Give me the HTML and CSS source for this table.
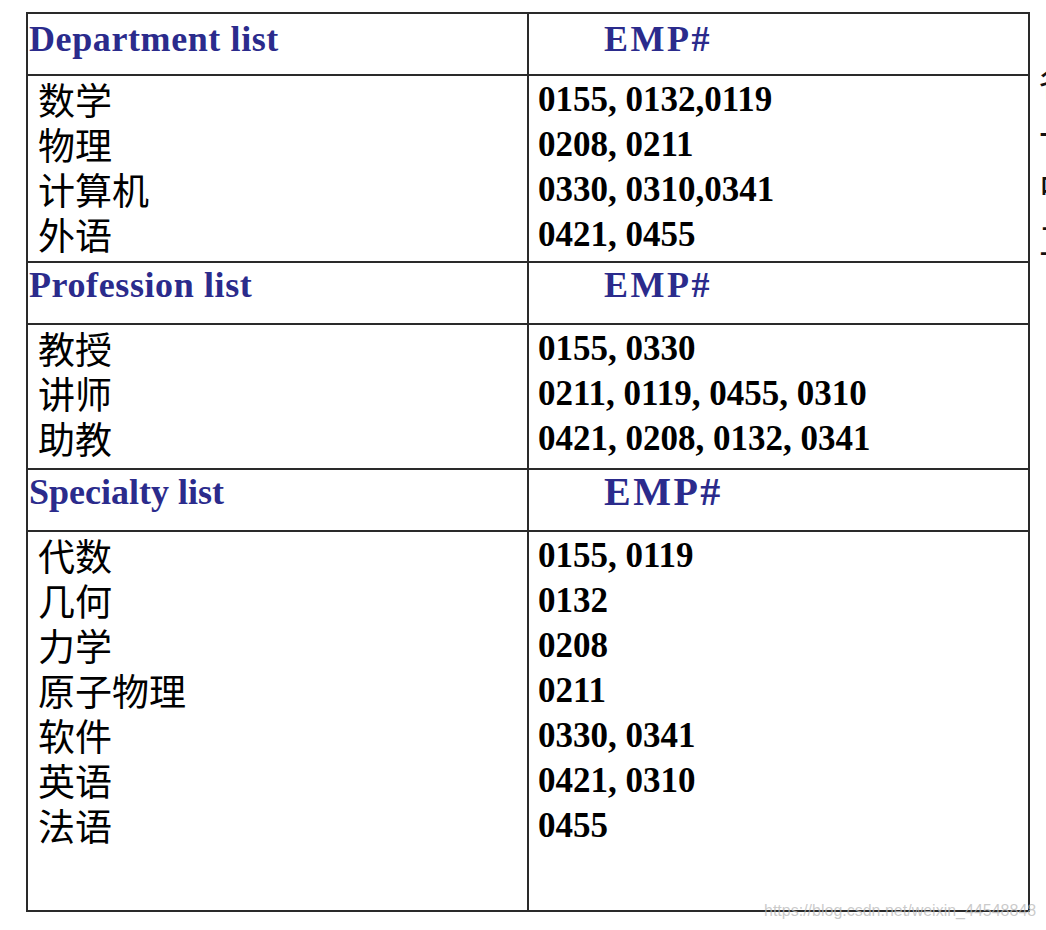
FILE: index.html
```html
<!DOCTYPE html>
<html lang="zh-CN">
<head>
<meta charset="utf-8">
<title>Index lists</title>
<link rel="stylesheet" href="styles.css">
</head>
<body>
<div class="page">
  <div class="sheet">
    <div class="cell head"><span class="title">Department list</span></div>
    <div class="cell head head-right"><span class="emp">EMP#</span></div>
    <div class="cell body-left">
      <div class="line">数学</div>
      <div class="line">物理</div>
      <div class="line">计算机</div>
      <div class="line">外语</div>
    </div>
    <div class="cell body-right">
      <div class="line">0155, 0132,0119</div>
      <div class="line">0208, 0211</div>
      <div class="line">0330, 0310,0341</div>
      <div class="line">0421, 0455</div>
    </div>

    <div class="cell head head-tight"><span class="title">Profession list</span></div>
    <div class="cell head head-right head-tight"><span class="emp">EMP#</span></div>
    <div class="cell body-left">
      <div class="line">教授</div>
      <div class="line">讲师</div>
      <div class="line">助教</div>
    </div>
    <div class="cell body-right">
      <div class="line">0155, 0330</div>
      <div class="line">0211, 0119, 0455, 0310</div>
      <div class="line">0421, 0208, 0132, 0341</div>
    </div>

    <div class="cell head head-tight"><span class="title title-narrow">Specialty list</span></div>
    <div class="cell head head-right head-tight"><span class="emp emp-large">EMP#</span></div>
    <div class="cell body-left">
      <div class="line">代数</div>
      <div class="line">几何</div>
      <div class="line">力学</div>
      <div class="line">原子物理</div>
      <div class="line">软件</div>
      <div class="line">英语</div>
      <div class="line">法语</div>
    </div>
    <div class="cell body-right">
      <div class="line">0155, 0119</div>
      <div class="line">0132</div>
      <div class="line">0208</div>
      <div class="line">0211</div>
      <div class="line">0330, 0341</div>
      <div class="line">0421, 0310</div>
      <div class="line">0455</div>
    </div>
  </div>
  <div class="side">
    <div class="side-line">各</div>
    <div class="side-line">一</div>
    <div class="side-line">中</div>
    <div class="side-line">工</div>
  </div>
</div>
<div class="watermark">https://blog.csdn.net/weixin_44548848</div>
</body>
</html>
```

FILE: styles.css
```css
html, body {
  margin: 0;
  padding: 0;
  background: #ffffff;
  overflow: hidden;
}

body {
  width: 1046px;
  height: 930px;
  position: relative;
  font-family: "Liberation Serif", "Noto Sans CJK SC", serif;
  color: #000;
}

.page {
  display: flex;
  align-items: flex-start;
  padding: 12px 0 0 26px;
}

.sheet {
  flex: none;
  display: grid;
  grid-template-columns: 499px 499px;
  grid-template-rows: 60px 185px 60px 143px 60px 378px;
  gap: 2px;
  padding: 2px;
  background: #2a2a2a;
}

.cell {
  background: #fff;
}

.head {
  padding: 5px 0 0 1px;
  line-height: 40px;
  color: #2b2b8c;
  font-weight: bold;
}

.head-tight {
  padding-top: 2px;
}

.head-right {
  padding-left: 75px;
}

.title {
  font-size: 36px;
  letter-spacing: 0.6px;
}

.title-narrow {
  letter-spacing: 0;
}

.emp {
  font-size: 36px;
  letter-spacing: 2.5px;
}

.emp-large {
  font-size: 40px;
  letter-spacing: 2.5px;
}

.body-left {
  padding: 1px 0 0 10px;
  font-family: "Noto Sans CJK SC", sans-serif;
  font-size: 37px;
}

.body-right {
  padding: 1px 0 0 9px;
  font-family: "Liberation Serif", serif;
  font-weight: bold;
  font-size: 35px;
}

.line {
  height: 45px;
  line-height: 45px;
  white-space: nowrap;
}

.side {
  flex: none;
  margin: 42px 0 0 9px;
  font-family: "Noto Sans CJK SC", sans-serif;
  font-size: 37px;
  color: #111;
}

.side-line {
  height: 53px;
  line-height: 53px;
}

.watermark {
  position: absolute;
  left: 764px;
  top: 902px;
  font-family: "Liberation Sans", sans-serif;
  font-size: 16px;
  color: rgba(185, 185, 185, 0.75);
  white-space: nowrap;
}
```
